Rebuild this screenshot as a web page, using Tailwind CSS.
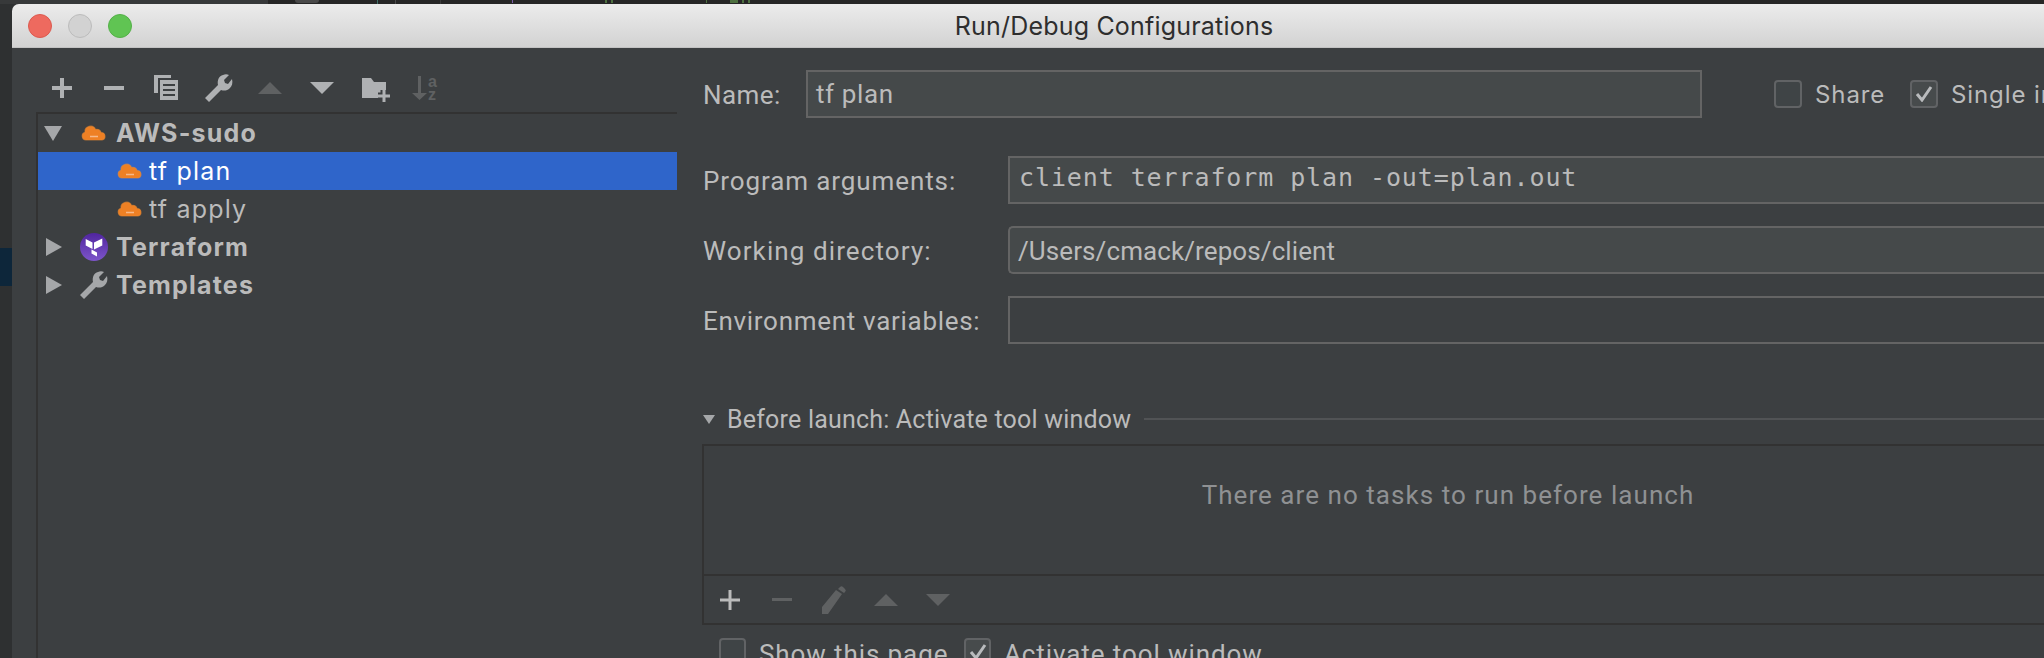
<!DOCTYPE html>
<html><head><meta charset="utf-8"><script src="https://cdn.jsdelivr.net/npm/@tailwindcss/browser@4"></script></head>
<body class="m-0 overflow-hidden bg-[#2e3031]">
<div class="relative w-[2044px] h-[658px] overflow-hidden bg-[#2e3031] font-['Roboto','Liberation_Sans',sans-serif]">
  <!-- backdrop strip showing behind the window -->
  <div class="absolute left-0 top-0 w-[268px] h-1 bg-[#37393a]"></div>
  <div class="absolute left-[268px] top-0 right-0 h-1 bg-[#262626]"></div>
  <div class="absolute left-[295px] top-0 w-[24px] h-[3px] rounded-b-full bg-[#4a4a4a]"></div>
  <div class="absolute left-[377px] top-0 w-px h-1 bg-[#3f6f68]"></div>
  <div class="absolute left-[395px] top-0 w-px h-1 bg-[#4a4a4a]"></div>
  <div class="absolute left-[440px] top-0 w-px h-1 bg-[#3a3a3a]"></div>
  <div class="absolute left-[512px] top-0 w-px h-[3px] bg-[#7a5ca5]"></div>
  <div class="absolute left-[605px] top-0 w-[2px] h-[3px] bg-[#4d7040]"></div>
  <div class="absolute left-[611px] top-0 w-[2px] h-[3px] bg-[#4d7040]"></div>
  <div class="absolute left-[706px] top-0 w-px h-[3px] bg-[#4d7040]"></div>
  <div class="absolute left-[730px] top-0 w-[8px] h-[3px] bg-[#4d7040]"></div>
  <div class="absolute left-[742px] top-0 w-[2px] h-[3px] bg-[#4d7040]"></div>
  <div class="absolute left-[748px] top-0 w-[2px] h-[3px] bg-[#4d7040]"></div>
  <div class="absolute left-0 top-[248px] w-3 h-[38px] bg-[#0d263a]"></div>
  <!-- window -->
  <div class="absolute left-3 top-1 w-[2032px] h-[654px] flex flex-col rounded-tl-[7px] overflow-hidden bg-[#3c3f41]">
    <div class="relative h-[44px] shrink-0 flex items-center justify-center pt-[2px] bg-gradient-to-b from-[#ececec] to-[#d2d2d2] border-b border-[#c2c2c2]">
      <div class="absolute left-4 top-[10px] flex gap-[16px]">
        <span class="w-6 h-6 rounded-full bg-[#ee6a5f] border border-[#dc5a4f]"></span>
        <span class="w-6 h-6 rounded-full bg-[#d2d2d2] border border-[#bcbcbc]"></span>
        <span class="w-6 h-6 rounded-full bg-[#60c453] border border-[#54b048]"></span>
      </div>
      <span class="text-[25px] tracking-[0.2px] text-[#2e2e2e] font-['Inter',sans-serif] ml-[172px]">Run/Debug Configurations</span>
    </div>
    <div class="flex flex-1 min-h-0">
      <!-- left pane -->
      <div class="w-[665px] shrink-0 flex flex-col pl-[24px]">
        <div class="h-[64px] shrink-0 flex items-start pt-[24px] pl-[10px] gap-[20px]">
          <svg width="32" height="32" viewBox="0 0 32 32" class="shrink-0"><path d="M14 6h4v8h8v4h-8v8h-4v-8H6v-4h8z" fill="#afb1b3"/></svg>
          <svg width="32" height="32" viewBox="0 0 32 32" class="shrink-0"><rect x="6" y="14" width="20" height="4" fill="#afb1b3"/></svg>
          <svg width="32" height="32" viewBox="0 0 32 32" class="shrink-0"><path d="M4 3h17v3H8v15H4z" fill="#afb1b3"/><path fill-rule="evenodd" d="M10 8h18v20H10zM13 12v2h12v-2zM13 17v2h12v-2zM13 22v2h12v-2z" fill="#afb1b3"/></svg>
          <svg width="32" height="32" viewBox="0 0 32 32" class="shrink-0"><path transform="translate(3 2)" d="M4 28L0 24 13 11C12 6 14 2 18 1 20 0 22 0 24 1L19 6 20 9 23 10 27 5C28 9 27 12 25 14 22 17 19 17 16 16Z" fill="#afb1b3"/></svg>
          <svg width="32" height="32" viewBox="0 0 32 32" class="shrink-0"><path d="M16 10L28 22H4z" fill="#5f6162"/></svg>
          <svg width="32" height="32" viewBox="0 0 32 32" class="shrink-0"><path d="M4 10H28L16 22z" fill="#afb1b3"/></svg>
          <svg width="32" height="32" viewBox="0 0 32 32" class="shrink-0 overflow-visible"><path d="M4 6H13L16 10H28V26H4z" fill="#afb1b3"/><path d="M26 18v12M20 24h12" stroke="#3c3f41" stroke-width="7"/><path d="M26 18v12M20 24h12" stroke="#afb1b3" stroke-width="3"/></svg>
          <svg width="32" height="32" viewBox="0 0 32 32" class="shrink-0 overflow-visible"><path d="M8 4h3v17h6l-7.500 7L2 21h6z" fill="#5f6162"/><text x="18" y="15" font-size="16" font-weight="700" fill="#5f6162" font-family="Liberation Sans">a</text><text x="18" y="28" font-size="16" font-weight="700" fill="#5f6162" font-family="Liberation Sans">z</text></svg>
        </div>
        <div class="flex-1 border-l-[2px] border-t-[2px] border-[#323232] text-[25px] tracking-[1.2px] text-[#bbbbbb] font-['Inter',sans-serif]">
          <div class="h-[38px] flex items-center pl-[6px] font-bold">
            <svg width="18" height="15" viewBox="0 0 18 15" class="mr-[20px] shrink-0"><path d="M0 0h18L9 15z" fill="#a5a7a9"/></svg>
            <svg width="24" height="16" viewBox="0 0 24 16" class="mr-[10px] shrink-0 overflow-visible"><path d="M4 15A4 4 0 0 1 3 7.200 5.500 5.500 0 0 1 13.500 4.500 4.200 4.200 0 0 1 19 7.500 3.800 3.800 0 0 1 20 15Z" fill="#ee8024" stroke="#f08a2e" stroke-opacity="0.6" stroke-width="1.200"/><path d="M8 11.500h8" fill="none" stroke="#f6b98a" stroke-width="1.500"/></svg>
            <span class="pt-[2px]">AWS-sudo</span>
          </div>
          <div class="h-[38px] flex items-center pl-[80px] bg-[#2f65ca] text-white">
            <svg width="24" height="16" viewBox="0 0 24 16" class="mr-[7px] shrink-0 overflow-visible"><path d="M4 15A4 4 0 0 1 3 7.200 5.500 5.500 0 0 1 13.500 4.500 4.200 4.200 0 0 1 19 7.500 3.800 3.800 0 0 1 20 15Z" fill="#ee8024" stroke="#f08a2e" stroke-opacity="0.6" stroke-width="1.200"/><path d="M8 11.500h8" fill="none" stroke="#f6b98a" stroke-width="1.500"/></svg>
            <span class="pt-[2px]">tf plan</span>
          </div>
          <div class="h-[38px] flex items-center pl-[80px]">
            <svg width="24" height="16" viewBox="0 0 24 16" class="mr-[7px] shrink-0 overflow-visible"><path d="M4 15A4 4 0 0 1 3 7.200 5.500 5.500 0 0 1 13.500 4.500 4.200 4.200 0 0 1 19 7.500 3.800 3.800 0 0 1 20 15Z" fill="#ee8024" stroke="#f08a2e" stroke-opacity="0.6" stroke-width="1.200"/><path d="M8 11.500h8" fill="none" stroke="#f6b98a" stroke-width="1.500"/></svg>
            <span class="pt-[2px]">tf apply</span>
          </div>
          <div class="h-[38px] flex items-center pl-[8px] font-bold">
            <svg width="16" height="18" viewBox="0 0 16 18" class="mr-[18px] shrink-0"><path d="M0 0l16 9-16 9z" fill="#a5a7a9"/></svg>
            <svg width="28" height="28" viewBox="0 0 28 28" class="mr-[8px] shrink-0"><defs><linearGradient id="tfg" x1="0" y1="0" x2="0" y2="1"><stop offset="0" stop-color="#50259f"/><stop offset="1" stop-color="#7d55c9"/></linearGradient></defs><circle cx="14" cy="14" r="14" fill="url(#tfg)"/><path d="M5.700 6L12.500 9.500V16L5.700 12.500ZM14 9.500L22.300 5.500V12.500L14 16.500ZM11.500 16.500L17 19.500V23.500L11.500 20.500Z" fill="#fff"/></svg>
            <span class="pt-[2px]">Terraform</span>
          </div>
          <div class="h-[38px] flex items-center pl-[8px] font-bold">
            <svg width="16" height="18" viewBox="0 0 16 18" class="mr-[18px] shrink-0"><path d="M0 0l16 9-16 9z" fill="#a5a7a9"/></svg>
            <svg width="28" height="28" viewBox="0 0 28 28" class="mr-[8px] shrink-0"><path d="M4 28L0 24 13 11C12 6 14 2 18 1 20 0 22 0 24 1L19 6 20 9 23 10 27 5C28 9 27 12 25 14 22 17 19 17 16 16Z" fill="#a5a7a9"/></svg>
            <span class="pt-[2px]">Templates</span>
          </div>
        </div>
      </div>
      <!-- right pane -->
      <div class="flex-1 min-w-0 overflow-hidden pl-[26px] pt-[22px] text-[#bbbbbb] text-[26px]">
        <div class="flex items-center h-[48px] whitespace-nowrap">
          <span class="w-[103px] shrink-0 pt-[3px] tracking-[0.4px]">Name:</span>
          <div class="w-[896px] shrink-0 h-[48px] flex items-center bg-[#45494a] border-2 border-[#646464] pl-[8px] pt-[1px] tracking-[0.6px]">tf plan</div>
          <span class="ml-[72px] w-[28px] h-[28px] shrink-0 rounded-[4px] border-2 border-[#616365] bg-[#3f4446]"></span>
          <span class="ml-[13px] w-[95px] shrink-0 pt-[1px] font-['Inter',sans-serif] text-[24px] tracking-[0.9px]">Share</span>
          <span class="w-[28px] h-[28px] shrink-0 rounded-[4px] border-2 border-[#616365] bg-[#474b4c] flex items-center justify-center"><svg width="18" height="16" viewBox="0 0 18 16"><path d="M2 8l5 6 9-13" fill="none" stroke="#b9bbbd" stroke-width="3"/></svg></span>
          <span class="ml-[13px] pt-[1px] font-['Inter',sans-serif] text-[24px] tracking-[0.9px]">Single instance only</span>
        </div>
        <div class="flex items-center h-[48px] mt-[38px] whitespace-nowrap">
          <span class="w-[305px] shrink-0 pt-[3px] tracking-[0.9px]">Program arguments:</span>
          <div class="flex-1 h-[48px] flex items-center bg-[#45494a] border-y-2 border-l-2 border-[#646464] pl-[9px] font-['DejaVu_Sans_Mono',monospace] text-[25px] tracking-[0.9px] pb-[4px]">client terraform plan -out=plan.out</div>
        </div>
        <div class="flex items-center h-[48px] mt-[22px] whitespace-nowrap">
          <span class="w-[305px] shrink-0 pt-[3px] tracking-[1.1px]">Working directory:</span>
          <div class="flex-1 h-[48px] flex items-center bg-[#45494a] border-y-2 border-l-2 border-[#646464] rounded-l-[5px] pl-[8px] pt-[3px] tracking-[0.1px]">/Users/cmack/repos/client</div>
        </div>
        <div class="flex items-center h-[48px] mt-[22px] whitespace-nowrap">
          <span class="w-[305px] shrink-0 pt-[3px] tracking-[0.7px]">Environment variables:</span>
          <div class="flex-1 h-[48px] border-y-2 border-l-2 border-[#646464]"></div>
        </div>
        <div class="flex items-center h-[28px] mt-[61px]">
          <svg width="12" height="9" viewBox="0 0 12 9" class="shrink-0 mr-[12px]"><path d="M0 0h12L6 9z" fill="#a5a7a9"/></svg>
          <span class="whitespace-nowrap text-[25px] tracking-[0.2px] pt-[1px]">Before launch: Activate tool window</span>
          <div class="flex-1 h-[2px] ml-[13px] bg-[#515355]"></div>
        </div>
        <div class="w-[1492px] ml-[-1px] mt-[11px] border-2 border-[#323232]">
          <div class="h-[128px] flex items-center justify-center text-[#8f9193] pb-[29px] tracking-[1.05px]">There are no tasks to run before launch</div>
          <div class="h-[49px] border-t-2 border-[#323232] flex items-center pl-[10px] gap-[20px]">
            <svg width="32" height="32" viewBox="0 0 32 32" class="shrink-0"><path d="M14.500 6h3v8.500h8.500v3h-8.500v8.500h-3v-8.500H6v-3h8.500z" fill="#bbbbbb"/></svg>
            <svg width="32" height="32" viewBox="0 0 32 32" class="shrink-0"><rect x="6" y="14" width="20" height="3" fill="#5f6162"/></svg>
            <svg width="32" height="32" viewBox="0 0 32 32" class="shrink-0"><path d="M4 30V23L18 6 24 10 10 30ZM20 5L22 3A2 2 0 0 1 25 3L27 5A2 2 0 0 1 27 8L26 9Z" fill="#5f6162"/></svg>
            <svg width="32" height="32" viewBox="0 0 32 32" class="shrink-0"><path d="M16 10L28 22H4z" fill="#5f6162"/></svg>
            <svg width="32" height="32" viewBox="0 0 32 32" class="shrink-0"><path d="M4 10H28L16 22z" fill="#5f6162"/></svg>
          </div>
        </div>
        <div class="flex items-start mt-[13px] ml-[16px] whitespace-nowrap">
          <span class="w-[27px] h-[28px] shrink-0 rounded-[4px] border-2 border-[#616365] bg-[#3f4446]"></span>
          <span class="ml-[13px] w-[205px] shrink-0 leading-[28px] pt-[2px] tracking-[0.9px]">Show this page</span>
          <span class="w-[27px] h-[28px] shrink-0 rounded-[4px] border-2 border-[#616365] bg-[#474b4c] flex items-center justify-center"><svg width="18" height="16" viewBox="0 0 18 16"><path d="M2 8l5 6 9-13" fill="none" stroke="#b9bbbd" stroke-width="3"/></svg></span>
          <span class="ml-[13px] leading-[28px] pt-[2px] tracking-[0.9px]">Activate tool window</span>
        </div>
      </div>
    </div>
  </div>
</div>
</body></html>
